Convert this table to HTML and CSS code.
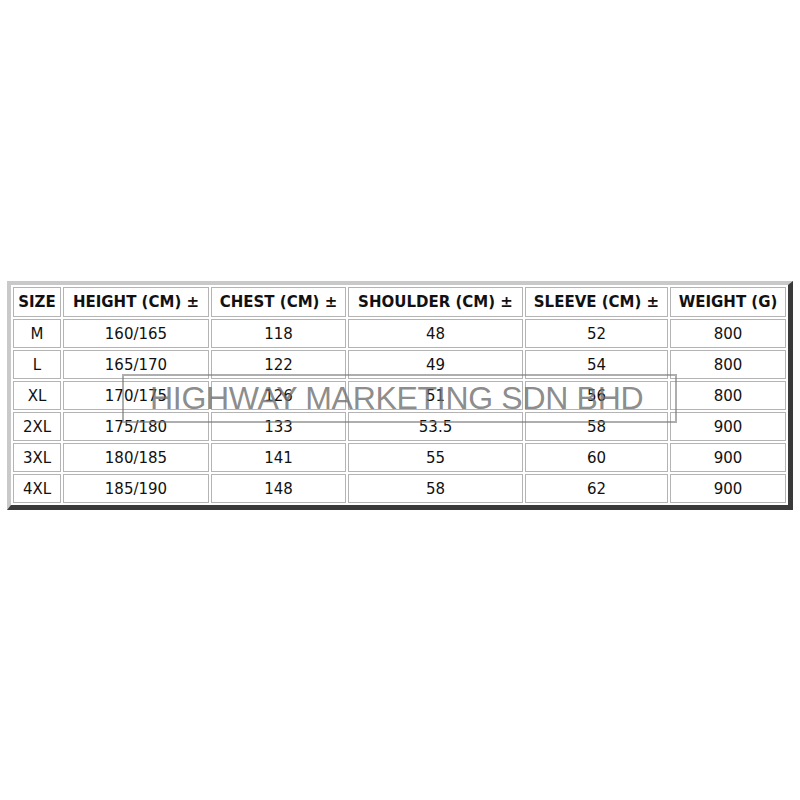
FILE: index.html
```html
<!DOCTYPE html>
<html>
<head>
<meta charset="utf-8">
<link rel="stylesheet" href="styles.css">
</head>
<body>
<div class="page">
  <table class="sizes">
    <thead>
      <tr>
        <th class="c-size">SIZE</th>
        <th class="c-height">HEIGHT (CM) ±</th>
        <th class="c-chest">CHEST (CM) ±</th>
        <th class="c-shoulder">SHOULDER (CM) ±</th>
        <th class="c-sleeve">SLEEVE (CM) ±</th>
        <th class="c-weight">WEIGHT (G)</th>
      </tr>
    </thead>
    <tbody>
      <tr><td>M</td><td>160/165</td><td>118</td><td>48</td><td>52</td><td>800</td></tr>
      <tr><td>L</td><td>165/170</td><td>122</td><td>49</td><td>54</td><td>800</td></tr>
      <tr><td>XL</td><td>170/175</td><td>126</td><td>51</td><td>56</td><td>800</td></tr>
      <tr><td>2XL</td><td>175/180</td><td>133</td><td>53.5</td><td>58</td><td>900</td></tr>
      <tr><td>3XL</td><td>180/185</td><td>141</td><td>55</td><td>60</td><td>900</td></tr>
      <tr><td>4XL</td><td>185/190</td><td>148</td><td>58</td><td>62</td><td>900</td></tr>
    </tbody>
  </table>
  <div class="watermark"><span class="wm-text">HIGHWAY MARKETING SDN BHD</span></div>
</div>
</body>
</html>
```
FILE: styles.css
```css
html, body {
  margin: 0;
  padding: 0;
  background: #ffffff;
}

.page {
  position: relative;
  width: 800px;
  height: 800px;
  box-sizing: border-box;
  padding-top: 281px;
  padding-left: 7px;
}

.sizes {
  border-collapse: separate;
  border-spacing: 2px;
  border-style: solid;
  border-width: 4px 5px 5px 4px;
  border-top-color: #c9c9c9;
  border-left-color: #c9c9c9;
  border-right-color: #3a3a3a;
  border-bottom-color: #3a3a3a;
  font-family: "DejaVu Sans", Verdana, sans-serif;
  font-size: 15px;
  color: #111111;
  table-layout: fixed;
}

.sizes th,
.sizes td {
  box-sizing: border-box;
  height: 29px;
  padding: 0;
  text-align: center;
  vertical-align: middle;
  border: 1px solid #b4b4b4;
  white-space: nowrap;
}

.sizes th {
  font-weight: bold;
  height: 30px;
}

.c-size { width: 48px; }
.c-height { width: 146px; }
.c-chest { width: 135px; }
.c-shoulder { width: 175px; }
.c-sleeve { width: 143px; }
.c-weight { width: 116px; }

.watermark {
  position: absolute;
  left: 122px;
  top: 374px;
  width: 555px;
  height: 49px;
  box-sizing: border-box;
  border: 2px solid rgba(120, 120, 120, 0.6);
  padding: 6px 0 0 26px;
}

.wm-text {
  display: block;
  font-family: "Liberation Sans", Arial, sans-serif;
  font-size: 32px;
  line-height: 32px;
  letter-spacing: -0.3px;
  color: rgba(110, 110, 110, 0.8);
  white-space: nowrap;
}
```
